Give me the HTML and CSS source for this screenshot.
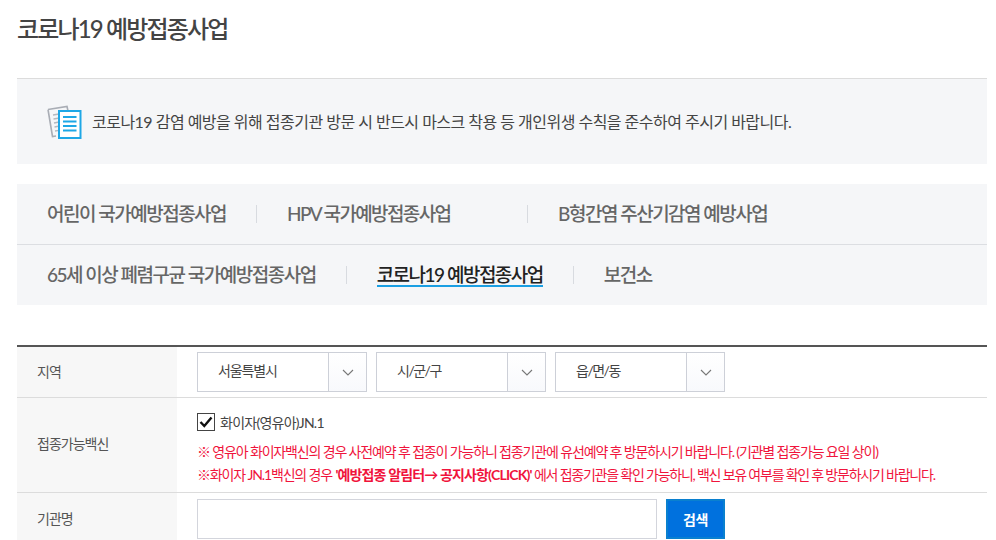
FILE: index.html
```html
<!DOCTYPE html>
<html lang="ko">
<head>
<meta charset="utf-8">
<title>코로나19 예방접종사업</title>
<link rel="stylesheet" href="styles.css">
</head>
<body>
<main class="page">
  <h1 class="title">코로나19 예방접종사업</h1>
  <div class="notice">
    <svg class="notice-icon" width="36" height="34" viewBox="0 0 36 34" aria-hidden="true">
      <path d="M1 4.500 L20 1.500 L21 6 M9 31 L5.500 31.500 L1 4.500" fill="#f5f6f8" stroke="#a9adb5" stroke-width="1.600"/>
      <path d="M6 10l6-1M6.500 14l6-1M7 18l5-1M7.500 22l5-1M8 26l4-.6" stroke="#b4b8bf" stroke-width="1.300"/>
      <rect x="12" y="6" width="21.500" height="27" fill="#fff" stroke="#1ea7e6" stroke-width="2"/>
      <path d="M16 12h13.500M16 16.500h13.500M16 21h13.500M16 25.500h13.500" stroke="#1ea7e6" stroke-width="2"/>
    </svg>
    <p class="notice-text">코로나19 감염 예방을 위해 접종기관 방문 시 반드시 마스크 착용 등 개인위생 수칙을 준수하여 주시기 바랍니다.</p>
  </div>
  <nav class="tabs">
    <ul class="tab-row">
      <li class="tab"><a>어린이 국가예방접종사업</a></li>
      <li class="tab tab-wide"><a>HPV 국가예방접종사업</a></li>
      <li class="tab"><a>B형간염 주산기감염 예방사업</a></li>
    </ul>
    <ul class="tab-row">
      <li class="tab"><a>65세 이상 폐렴구균 국가예방접종사업</a></li>
      <li class="tab"><a class="active">코로나19 예방접종사업</a></li>
      <li class="tab"><a>보건소</a></li>
    </ul>
  </nav>
  <form class="search">
    <div class="row row-region">
      <div class="label">지역</div>
      <div class="field selects">
        <div class="select"><span class="select-value">서울특별시</span><span class="select-btn"><svg width="12" height="7" viewBox="0 0 12 7"><path d="M1 1l5 5 5-5" fill="none" stroke="#777" stroke-width="1.100"/></svg></span></div>
        <div class="select"><span class="select-value select-path">시/군/구</span><span class="select-btn"><svg width="12" height="7" viewBox="0 0 12 7"><path d="M1 1l5 5 5-5" fill="none" stroke="#777" stroke-width="1.100"/></svg></span></div>
        <div class="select"><span class="select-value select-path">읍/면/동</span><span class="select-btn"><svg width="12" height="7" viewBox="0 0 12 7"><path d="M1 1l5 5 5-5" fill="none" stroke="#777" stroke-width="1.100"/></svg></span></div>
      </div>
    </div>
    <div class="row row-vaccine">
      <div class="label">접종가능백신</div>
      <div class="field vaccine">
        <div class="check-line">
          <span class="checkbox"><svg width="14" height="12" viewBox="0 0 14 12"><path d="M1.500 6l3.800 4L12.500 1.500" fill="none" stroke="#111" stroke-width="2.400"/></svg></span>
          <span class="check-label">화이자(영유아)JN.1</span>
        </div>
        <p class="warn">※ 영유아 화이자백신의 경우 사전예약 후 접종이 가능하니 접종기관에 유선예약 후 방문하시기 바랍니다. (기관별 접종가능 요일 상이)</p>
        <p class="warn">※화이자 JN.1백신의 경우 <b>'예방접종 알림터→ 공지사항(CLICK)'</b> <span class="warn-tail">에서 접종기관을 확인 가능하니, 백신 보유 여부를 확인 후 방문하시기 바랍니다.</span></p>
      </div>
    </div>
    <div class="row row-name">
      <div class="label">기관명</div>
      <div class="field name-field">
        <span class="text-input"></span>
        <span class="btn">검색</span>
      </div>
    </div>
  </form>
</main>
</body>
</html>
```

FILE: styles.css
```css
* { box-sizing: border-box; }
html, body { margin: 0; padding: 0; height: 540px; overflow: hidden; background: #fff; }
body { font-family: Lato, "Noto Sans CJK KR", sans-serif; color: #333; }
ul { list-style: none; margin: 0; padding: 0; }
p { margin: 0; }
.page { width: 970px; margin-left: 17px; }

.title { margin: 0; height: 78px; padding-top: 11px; font-size: 24px; line-height: 36px; font-weight: 500; letter-spacing: -1.85px; color: #444; }

.notice { height: 86px; border-top: 1px solid #dcdcdc; background: #f5f6f8; display: flex; align-items: center; padding-left: 30px; }
.notice-icon { margin-right: 9px; margin-top: 1px; }
.notice-text { font-size: 16px; letter-spacing: -0.52px; color: #444; padding-bottom: 2px; }

.tabs { margin-top: 20px; background: #f5f6f8; }
.tab-row { display: flex; align-items: center; height: 60px; padding-left: 30px; }
.tab-row + .tab-row { height: 61px; border-top: 1px solid #dcdee2; }
.tab { display: flex; align-items: center; height: 18px; padding-right: 30px; margin-right: 30px; border-right: 1px solid #d8dbe0; }
.tab:last-child { border-right: 0; }
.tab-wide { width: 241px; }
.tab a { font-size: 19px; line-height: 24px; font-weight: 500; letter-spacing: -1.5px; color: #666; white-space: nowrap; }
.tab-wide a { letter-spacing: -1.62px; }
.tab a.active { color: #222; box-shadow: inset 0 -2px 0 #1a9fe3; }

.search { margin-top: 40px; border-top: 2px solid #555; }
.row { display: flex; border-bottom: 1px solid #dcdcdc; }
.row-region { height: 51px; }
.row-vaccine { height: 95px; }
.row-name { height: 60px; border-bottom: 0; }
.label { width: 160px; flex: none; background: #f7f7f7; padding-left: 20px; display: flex; align-items: center; font-size: 14px; letter-spacing: -1px; color: #555; }
.row-region .label { padding-bottom: 2px; }
.row-vaccine .label { padding-bottom: 4px; }
.row-name .label { padding-bottom: 10px; }
.field { padding-left: 20px; flex: 1; }

.selects { display: flex; gap: 9px; padding-top: 5px; }
.select { width: 170px; height: 40px; display: flex; border: 1px solid #cdd0d8; background: #fff; }
.select-value { flex: 1; padding-left: 20px; font-size: 14px; line-height: 36px; letter-spacing: -1.1px; color: #444; }
.select-path { letter-spacing: -1.5px; }
.select-btn { width: 38px; flex: none; border-left: 1px solid #cdd0d8; display: flex; align-items: center; justify-content: center; background: linear-gradient(#fff, #f8f9fc); }

.vaccine { padding-top: 15px; }
.check-line { display: flex; align-items: center; height: 18px; margin-bottom: 9px; }
.checkbox { width: 18px; height: 18px; border: 1px solid #444; display: flex; align-items: center; justify-content: center; margin-right: 5px; }
.check-label { font-size: 14px; line-height: 16px; letter-spacing: -0.75px; color: #444; padding-top: 2px; }
.warn { font-size: 14px; line-height: 23px; letter-spacing: -1.15px; color: #f0143c; white-space: nowrap; }
.warn b { font-weight: 700; letter-spacing: -0.85px; margin-left: 1px; }
.warn-tail { letter-spacing: -1.22px; }

.name-field { display: flex; gap: 9px; padding-top: 6px; }
.text-input { width: 460px; height: 40px; border: 1px solid #d3d5dc; background: #fff; }
.btn { width: 59px; height: 40px; background: #0071de; border: 2px solid #0a80cf; color: #fff; font-size: 14px; font-weight: 700; display: flex; align-items: center; justify-content: center; letter-spacing: -0.3px; }
```
